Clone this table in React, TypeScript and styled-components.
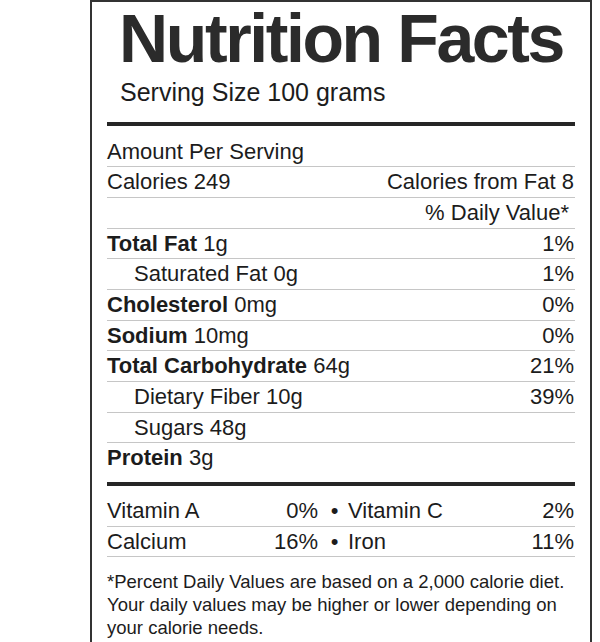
import React from "react";
import styled, { createGlobalStyle } from "styled-components";

const GlobalStyle = createGlobalStyle`
  html, body {
    margin: 0;
    padding: 0;
    background: #ffffff;
  }
  body {
    font-family: "Liberation Sans", Arial, Helvetica, sans-serif;
    color: #1c1c1c;
  }
`;

const Page = styled.div`
  width: 600px;
  height: 642px;
  overflow: hidden;
  padding-left: 90px;
  box-sizing: border-box;
`;

const Label = styled.section`
  width: 502px;
  box-sizing: border-box;
  border: 2px solid #333333;
  padding: 1.5px 15px 30px 15px;
  display: flex;
  flex-direction: column;
`;

const Title = styled.h1`
  margin: 0;
  font-size: 68px;
  line-height: 68px;
  font-weight: 700;
  letter-spacing: -2.4px;
  text-align: center;
  color: #2b2b2b;
`;

const Serving = styled.div`
  margin: 5px 0 0 13px;
  font-size: 25px;
  line-height: 30px;
  color: #1c1c1c;
`;

const ThickRule = styled.div<{ $gapTop: number }>`
  height: 4px;
  background: #262626;
  margin-top: ${(p) => p.$gapTop}px;
`;

const Row = styled.div<{ $indent?: boolean; $top?: number; $noLine?: boolean }>`
  display: flex;
  justify-content: space-between;
  align-items: baseline;
  font-size: 22px;
  line-height: 29.67px;
  padding-left: ${(p) => (p.$indent ? 27 : 0)}px;
  padding-top: ${(p) => p.$top ?? 0}px;
  border-bottom: ${(p) => (p.$noLine ? "none" : "1px solid #c6c6c6")};
`;

const Strong = styled.b`
  font-weight: 700;
`;

const Right = styled.span<{ $pad?: number }>`
  padding-right: ${(p) => p.$pad ?? 1}px;
`;

const VitRow = styled.div<{ $top?: number }>`
  display: grid;
  grid-template-columns: 212px 29px 1fr;
  align-items: baseline;
  font-size: 22px;
  line-height: 29.67px;
  padding-top: ${(p) => p.$top ?? 0}px;
  border-bottom: 1px solid #c6c6c6;
`;

const VitCell = styled.div`
  display: flex;
  justify-content: space-between;
  padding-right: 1px;
`;

const Bullet = styled.span`
  text-align: center;
  padding-left: 2px;
`;

const Footnote = styled.p`
  margin: 13px 0 0 0;
  font-size: 18.5px;
  line-height: 23px;
  color: #1c1c1c;
`;

type Nutrient = {
  name: string;
  amount: string;
  pct?: string;
  bold?: boolean;
  indent?: boolean;
};

const nutrients: Nutrient[] = [
  { name: "Total Fat", amount: "1g", pct: "1%", bold: true },
  { name: "Saturated Fat", amount: "0g", pct: "1%", indent: true },
  { name: "Cholesterol", amount: "0mg", pct: "0%", bold: true },
  { name: "Sodium", amount: "10mg", pct: "0%", bold: true },
  { name: "Total Carbohydrate", amount: "64g", pct: "21%", bold: true },
  { name: "Dietary Fiber", amount: "10g", pct: "39%", indent: true },
  { name: "Sugars", amount: "48g", indent: true },
];

const vitamins: [string, string, string, string][] = [
  ["Vitamin A", "0%", "Vitamin C", "2%"],
  ["Calcium", "16%", "Iron", "11%"],
];

export default function App() {
  return (
    <>
      <GlobalStyle />
      <Page>
        <Label>
          <Title>Nutrition Facts</Title>
          <Serving>Serving Size 100 grams</Serving>
          <ThickRule $gapTop={15} />
          <Row $top={11}>
            <span>Amount Per Serving</span>
          </Row>
          <Row>
            <span>Calories 249</span>
            <Right>Calories from Fat 8</Right>
          </Row>
          <Row>
            <span />
            <Right $pad={6}>% Daily Value*</Right>
          </Row>
          {nutrients.map((n) => (
            <Row key={n.name} $indent={n.indent}>
              <span>
                {n.bold ? <Strong>{n.name}</Strong> : n.name} {n.amount}
              </span>
              {n.pct && <Right>{n.pct}</Right>}
            </Row>
          ))}
          <Row $noLine>
            <span>
              <Strong>Protein</Strong> 3g
            </span>
          </Row>
          <ThickRule $gapTop={9} />
          {vitamins.map((v, i) => (
            <VitRow key={v[0]} $top={i === 0 ? 10 : 0}>
              <VitCell>
                <span>{v[0]}</span>
                <span>{v[1]}</span>
              </VitCell>
              <Bullet>•</Bullet>
              <VitCell>
                <span>{v[2]}</span>
                <span>{v[3]}</span>
              </VitCell>
            </VitRow>
          ))}
          <Footnote>
            *Percent Daily Values are based on a 2,000 calorie diet.
            <br />
            Your daily values may be higher or lower depending on
            <br />
            your calorie needs.
          </Footnote>
        </Label>
      </Page>
    </>
  );
}
